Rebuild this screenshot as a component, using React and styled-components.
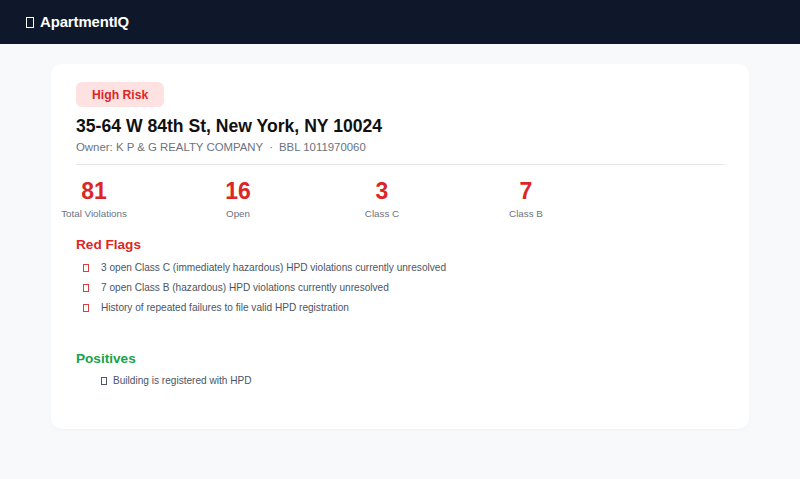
import React from "react";
import styled, { createGlobalStyle } from "styled-components";

const GlobalStyle = createGlobalStyle`
  html, body {
    margin: 0;
    padding: 0;
    background: #f8f9fb;
    font-family: "Liberation Sans", Arial, sans-serif;
  }
  * { box-sizing: border-box; }
`;

const Page = styled.div`
  min-height: 479px;
  background: #f8f9fb;
`;

const TopBar = styled.header`
  height: 44px;
  background: #0f172a;
  display: flex;
  align-items: center;
  padding: 0 26px;
`;

const Brand = styled.div`
  display: flex;
  align-items: center;
  gap: 6px;
  color: #ffffff;
  font-weight: 700;
  font-size: 14.9px;
  letter-spacing: -0.1px;
`;

/* hollow box mark used as a bullet / logo glyph */
const Mark = styled.span`
  display: inline-block;
  flex: none;
  width: ${(p) => p.$w}px;
  height: ${(p) => p.$h}px;
  border: ${(p) => p.$stroke || 1}px solid ${(p) => p.$color};
`;

const Main = styled.main`
  padding: 20px 51px 50px;
`;

const Card = styled.section`
  background: #ffffff;
  border-radius: 10px;
  box-shadow: 0 1px 3px rgba(15, 23, 42, 0.04);
  padding: 18px 24px 38px 25px;
`;

const Badge = styled.span`
  display: inline-flex;
  align-items: center;
  height: 25px;
  padding: 0 16px;
  border-radius: 6px;
  background: #fee2e2;
  color: #dc2626;
  font-size: 12.2px;
  font-weight: 700;
`;

const Address = styled.h1`
  margin: 8px 0 0;
  font-size: 17.6px;
  line-height: 22px;
  font-weight: 700;
  color: #111111;
`;

const Meta = styled.div`
  margin-top: 2px;
  font-size: 11.4px;
  line-height: 16px;
  color: #6b7280;
`;

const Dot = styled.span`
  margin: 0 6px;
`;

const Rule = styled.hr`
  margin: 9px 0 0;
  border: 0;
  border-top: 1px solid #e5e7eb;
`;

const Stats = styled.div`
  display: flex;
  gap: 108px;
  margin-top: 12px;
`;

const Stat = styled.div`
  width: 36px;
  display: flex;
  flex-direction: column;
  align-items: center;
`;

const StatValue = styled.div`
  font-size: 23px;
  line-height: 28px;
  font-weight: 700;
  color: #dc2626;
`;

const StatLabel = styled.div`
  margin-top: 2px;
  font-size: 9.8px;
  line-height: 14px;
  color: #6b7280;
  white-space: nowrap;
`;

const SectionTitle = styled.h2`
  margin: ${(p) => p.$top}px 0 0;
  font-size: 13.6px;
  line-height: 18px;
  font-weight: 700;
  color: ${(p) => p.$color};
`;

const List = styled.ul`
  list-style: none;
  margin: ${(p) => p.$top}px 0 0;
  padding: 0 0 0 ${(p) => p.$indent}px;
`;

const Item = styled.li`
  display: flex;
  align-items: center;
  gap: ${(p) => p.$gap}px;
  font-size: 10.1px;
  line-height: 20px;
  color: #4b5563;
`;

const stats = [
  { value: 81, label: "Total Violations" },
  { value: 16, label: "Open" },
  { value: 3, label: "Class C" },
  { value: 7, label: "Class B" },
];

const redFlags = [
  "3 open Class C (immediately hazardous) HPD violations currently unresolved",
  "7 open Class B (hazardous) HPD violations currently unresolved",
  "History of repeated failures to file valid HPD registration",
];

const positives = ["Building is registered with HPD"];

export default function App() {
  return (
    <Page>
      <GlobalStyle />
      <TopBar>
        <Brand>
          <Mark $w={8} $h={11} $stroke={1.5} $color="#ffffff" />
          ApartmentIQ
        </Brand>
      </TopBar>
      <Main>
        <Card>
          <Badge>High Risk</Badge>
          <Address>35-64 W 84th St, New York, NY 10024</Address>
          <Meta>
            Owner: K P &amp; G REALTY COMPANY<Dot>·</Dot>BBL 1011970060
          </Meta>
          <Rule />
          <Stats>
            {stats.map((s) => (
              <Stat key={s.label}>
                <StatValue>{s.value}</StatValue>
                <StatLabel>{s.label}</StatLabel>
              </Stat>
            ))}
          </Stats>

          <SectionTitle $top={15} $color="#dc2626">Red Flags</SectionTitle>
          <List $top={4} $indent={7}>
            {redFlags.map((t) => (
              <Item key={t} $gap={12}>
                <Mark $w={6} $h={8} $color="#e23b3b" />
                {t}
              </Item>
            ))}
          </List>

          <SectionTitle $top={32} $color="#16a34a">Positives</SectionTitle>
          <List $top={3} $indent={25}>
            {positives.map((t) => (
              <Item key={t} $gap={6}>
                <Mark $w={6} $h={8} $color="#4b5563" />
                {t}
              </Item>
            ))}
          </List>
        </Card>
      </Main>
    </Page>
  );
}
